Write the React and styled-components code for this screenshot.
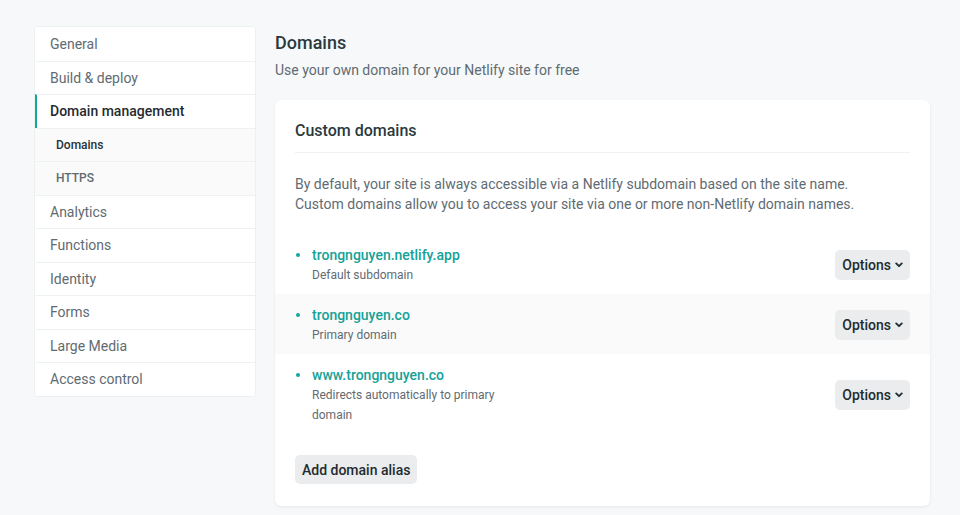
import styled, { createGlobalStyle } from 'styled-components';

const GlobalStyle = createGlobalStyle`
  body {
    margin: 0;
    background: #f6f8f9;
    font-family: Roboto, "Liberation Sans", sans-serif;
    color: #2e3b40;
    -webkit-font-smoothing: antialiased;
  }
`;

const Page = styled.div`
  display: flex;
  align-items: flex-start;
  gap: 19px;
  padding: 26px 30px 0 34px;
  height: 515px;
  box-sizing: border-box;
`;

const Sidebar = styled.nav`
  width: 220px;
  flex-shrink: 0;
  background: #fff;
  border: 1px solid #edf0f1;
  border-radius: 4px;
  overflow: hidden;
`;

const NavItem = styled.div`
  height: 33.5px;
  box-sizing: border-box;
  display: flex;
  align-items: center;
  padding-left: ${(p) => (p.$sub ? '19px' : '13px')};
  font-size: ${(p) => (p.$sub ? '12px' : '14px')};
  font-weight: ${(p) => (p.$active || p.$sub ? 500 : 400)};
  color: ${(p) => (p.$active ? '#1f2b30' : p.$sub ? (p.$current ? '#26343a' : '#5d6a71') : '#5f6b72')};
  background: ${(p) => (p.$sub ? '#fafafa' : '#fff')};
  border-top: 1px solid #eef0f1;
  border-left: 2px solid ${(p) => (p.$active ? '#13a89e' : 'transparent')};

  &:first-child {
    border-top: none;
  }
`;

const Main = styled.main`
  flex: 1;
  display: flex;
  flex-direction: column;
`;

const Title = styled.h1`
  margin: 6px 0 0;
  font-size: 18px;
  font-weight: 500;
  line-height: 22px;
  color: #2b393e;
`;

const Subtitle = styled.p`
  margin: 7px 0 0;
  font-size: 14px;
  line-height: 18px;
  color: #5f6b72;
`;

const Card = styled.section`
  margin-top: 21px;
  background: #fff;
  border-radius: 6px;
  box-shadow: 0 1px 3px rgba(30, 50, 60, 0.08);
  padding: 21px 0 22px;
`;

const CardHeading = styled.h2`
  margin: 0 20px;
  padding-bottom: 11px;
  border-bottom: 1px solid #eef0f1;
  font-size: 16px;
  font-weight: 500;
  line-height: 20px;
  color: #2b393e;
`;

const Intro = styled.p`
  margin: 22px 20px 20px;
  font-size: 14px;
  line-height: 19.5px;
  color: #5f6b72;
`;

const DomainList = styled.ul`
  list-style: none;
  margin: 0;
  padding: 0;
`;

const DomainRow = styled.li`
  display: flex;
  align-items: center;
  justify-content: space-between;
  padding: ${(p) => (p.$tall ? '11px 20px 12px' : '11px 20px 9px')};
  background: ${(p) => (p.$shaded ? '#fafafa' : '#fff')};
`;

const DomainInfo = styled.div`
  position: relative;
  padding-left: 17px;
  width: 200px;

  &::before {
    content: '';
    position: absolute;
    left: 1px;
    top: 8px;
    width: 4px;
    height: 4px;
    border-radius: 50%;
    background: #13a89e;
  }
`;

const DomainName = styled.div`
  font-size: 14px;
  font-weight: 500;
  line-height: 20px;
  color: #15a297;
`;

const DomainNote = styled.div`
  font-size: 12px;
  line-height: 20px;
  color: #5f6b72;
`;

const Button = styled.button`
  display: inline-flex;
  align-items: center;
  gap: 4px;
  height: ${(p) => p.$height || '30px'};
  padding: 0 7px;
  border: none;
  border-radius: 5px;
  background: #eaeced;
  font-family: inherit;
  font-size: 14px;
  font-weight: 500;
  color: #1f2b30;
  cursor: pointer;
`;

const AddButton = styled(Button)`
  margin: 18px 20px 0;
  align-self: flex-start;
`;

const Chevron = () => (
  <svg width="8" height="6" viewBox="0 0 8 6" aria-hidden="true">
    <path d="M1.2 1.4 L4 4.2 L6.8 1.4" fill="none" stroke="#1f2b30" strokeWidth="1.8" strokeLinecap="round" strokeLinejoin="round" />
  </svg>
);

const navItems = [
  { label: 'General' },
  { label: 'Build & deploy' },
  { label: 'Domain management', active: true },
  { label: 'Domains', sub: true, current: true },
  { label: 'HTTPS', sub: true },
  { label: 'Analytics' },
  { label: 'Functions' },
  { label: 'Identity' },
  { label: 'Forms' },
  { label: 'Large Media' },
  { label: 'Access control' },
];

const domains = [
  { name: 'trongnguyen.netlify.app', note: 'Default subdomain' },
  { name: 'trongnguyen.co', note: 'Primary domain', shaded: true },
  { name: 'www.trongnguyen.co', note: 'Redirects automatically to primary domain', tall: true },
];

const App = () => (
  <>
    <GlobalStyle />
    <Page>
      <Sidebar>
        {navItems.map((item) => (
          <NavItem key={item.label} $active={item.active} $sub={item.sub} $current={item.current}>
            {item.label}
          </NavItem>
        ))}
      </Sidebar>
      <Main>
        <Title>Domains</Title>
        <Subtitle>Use your own domain for your Netlify site for free</Subtitle>
        <Card>
          <CardHeading>Custom domains</CardHeading>
          <Intro>
            By default, your site is always accessible via a Netlify subdomain based on the site name.
            <br />
            Custom domains allow you to access your site via one or more non-Netlify domain names.
          </Intro>
          <DomainList>
            {domains.map((d) => (
              <DomainRow key={d.name} $shaded={d.shaded} $tall={d.tall}>
                <DomainInfo>
                  <DomainName>{d.name}</DomainName>
                  <DomainNote>{d.note}</DomainNote>
                </DomainInfo>
                <Button>
                  Options <Chevron />
                </Button>
              </DomainRow>
            ))}
          </DomainList>
          <AddButton $height="29px">Add domain alias</AddButton>
        </Card>
      </Main>
    </Page>
  </>
);

export default App;
